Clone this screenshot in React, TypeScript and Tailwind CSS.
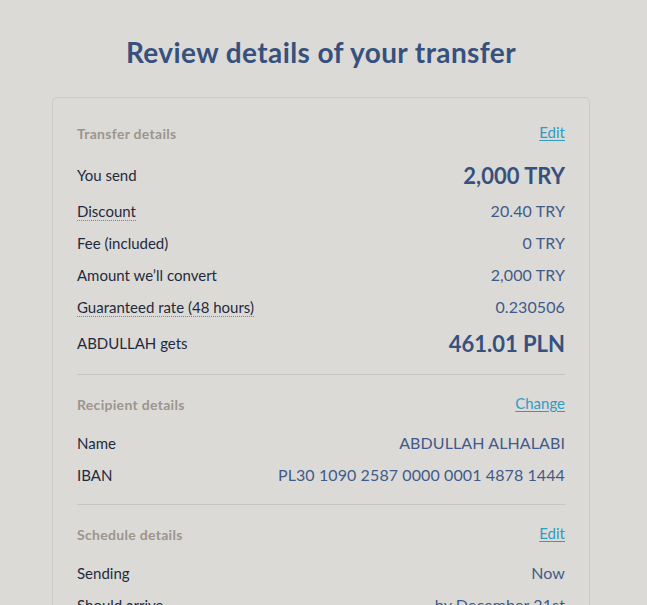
import React from "react";

type Row = { label: string; value: string; dotted?: boolean; big?: boolean };

const transferRows: Row[] = [
  { label: "You send", value: "2,000 TRY", big: true },
  { label: "Discount", value: "20.40 TRY", dotted: true },
  { label: "Fee (included)", value: "0 TRY" },
  { label: "Amount we’ll convert", value: "2,000 TRY" },
  { label: "Guaranteed rate (48 hours)", value: "0.230506", dotted: true },
  { label: "ABDULLAH gets", value: "461.01 PLN", big: true },
];

const recipientRows: Row[] = [
  { label: "Name", value: "ABDULLAH ALHALABI" },
  { label: "IBAN", value: "PL30 1090 2587 0000 0001 4878 1444" },
];

const scheduleRows: Row[] = [
  { label: "Sending", value: "Now" },
  { label: "Should arrive", value: "by December 21st" },
];

const DetailRow = ({ row }: { row: Row }) => (
  <div className={`flex items-center justify-between ${row.big ? "h-10" : "h-8"}`}>
    <span
      className={`text-[15px] text-[#1f2a40] ${
        row.dotted ? "border-b border-dotted border-[#2d9fd0] leading-[18px]" : ""
      }`}
    >
      {row.label}
    </span>
    <span
      className={
        row.big
          ? "text-[22px] font-bold text-[#37517e]"
          : "text-[16px] tracking-[0.1px] text-[#3f5b8b]"
      }
    >
      {row.value}
    </span>
  </div>
);

const Section = ({
  title,
  action,
  rows,
  className,
  headGap,
}: {
  title: string;
  action: string;
  rows: Row[];
  className: string;
  headGap: string;
}) => (
  <div className={className}>
    <div className={`flex h-6 items-center justify-between ${headGap}`}>
      <span className="text-[14px] leading-none tracking-[0.3px] font-bold text-[#9b958e]">{title}</span>
      <a href="#" className="pb-1 text-[15px] leading-none text-[#2f9cc6] underline underline-offset-2">
        {action}
      </a>
    </div>
    {rows.map((r) => (
      <DetailRow key={r.label} row={r} />
    ))}
  </div>
);

export default function App() {
  return (
    <div className="h-[605px] overflow-hidden bg-[#dcdad6] font-['Lato',sans-serif]">
      <div className="w-[538px] ml-[52px] pt-9">
        <h1 className="text-center text-[28px] leading-8 tracking-[0.4px] font-bold text-[#37517e] mb-[29px]">
          Review details of your transfer
        </h1>
        <div className="rounded-[5px] border border-[#cdcac5] px-6 pt-6 pb-6">
          <Section
            title="Transfer details"
            action="Edit"
            rows={transferRows}
            headGap="mb-[9px]"
            className="pb-[11px] border-b border-[#c9c6c1]"
          />
          <Section
            title="Recipient details"
            action="Change"
            rows={recipientRows}
            headGap="mb-[10px]"
            className="pt-[18px] pb-[13px] border-b border-[#c9c6c1]"
          />
          <Section
            title="Schedule details"
            action="Edit"
            rows={scheduleRows}
            headGap="mb-[10px]"
            className="pt-[18px]"
          />
        </div>
      </div>
    </div>
  );
}
